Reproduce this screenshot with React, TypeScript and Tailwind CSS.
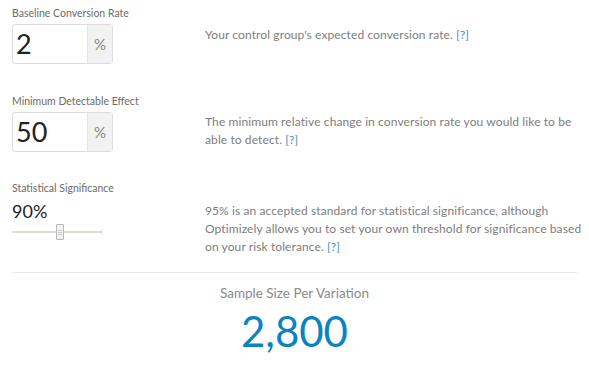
import React, { useState } from "react";

type RowProps = {
  label: string;
  children: React.ReactNode;
  help: React.ReactNode;
  helpClass: string;
};

const Row: React.FC<RowProps> = ({ label, children, help, helpClass }) => (
  <div className="flex">
    <div className="w-[193px] shrink-0">
      <div className="text-[10.5px] leading-[14px] text-[#6b6b6b]">{label}</div>
      {children}
    </div>
    <div
      className={`flex-1 text-[12px] leading-[18px] tracking-[0.1px] text-[#7d7d7d] ${helpClass}`}
    >
      {help}
    </div>
  </div>
);

const Help = () => <span className="text-[#3c8fcb]">[?]</span>;

const PercentInput: React.FC<{ value: string }> = ({ value }) => (
  <div className="mt-[4px] flex h-[40px] w-[101px] rounded-[3px] border border-[#dcdcdc] bg-white">
    <div className="flex flex-1 items-center pl-[3px] text-[27px] text-[#222]">{value}</div>
    <div className="flex w-[25px] items-center justify-center border-l border-[#e3e3e3] bg-[#f2f2f2] text-[15px] text-[#888]">
      %
    </div>
  </div>
);

export default function App() {
  const [sig] = useState(90);

  return (
    <div
      className="h-[365px] w-[589px] overflow-hidden bg-white px-3 pt-[6px]"
      style={{ fontFamily: "Lato, 'Open Sans', sans-serif" }}
    >
      <Row
        label="Baseline Conversion Rate"
        helpClass="pt-[20px]"
        help={
          <>
            Your control group's expected conversion rate. <Help />
          </>
        }
      >
        <PercentInput value="2" />
      </Row>

      <div className="h-[30px]" />

      <Row
        label="Minimum Detectable Effect"
        helpClass="pt-[19px]"
        help={
          <>
            The minimum relative change in conversion rate you would like to be able to detect.{" "}
            <Help />
          </>
        }
      >
        <PercentInput value="50" />
      </Row>

      <div className="h-[29px]" />

      <Row
        label="Statistical Significance"
        helpClass="pt-[21px] -mr-[9px]"
        help={
          <>
            95% is an accepted standard for statistical significance, although Optimizely allows
            you to set your own threshold for significance based on your risk tolerance. <Help />
          </>
        }
      >
        <div className="mt-[5px] text-[18px] leading-[22px] text-[#222]">{sig}%</div>
        <div className="relative mt-[2px] h-[16px] w-[91px]">
          <div className="absolute left-0 right-0 top-[7px] h-[2px] bg-[#e0dcd4]" />
          <div className="absolute left-[44px] top-0 flex h-[16px] w-[8px] flex-col items-center justify-center gap-[1px] rounded-[1px] border border-[#b8b8b8] bg-[#f3f3f3]">
            <div className="h-px w-[4px] bg-[#c8c8c8]" />
            <div className="h-px w-[4px] bg-[#c8c8c8]" />
            <div className="h-px w-[4px] bg-[#c8c8c8]" />
          </div>
        </div>
      </Row>

      <div className="mt-[16px] border-t border-[#e8e8e8]" />

      <div className="flex flex-col items-center pt-[11px]">
        <div className="text-[13.5px] leading-[18px] text-[#8a8a8a]">Sample Size Per Variation</div>
        <div className="mt-[6px] text-[42px] leading-[46px] text-[#0a84c1]">2,800</div>
      </div>
    </div>
  );
}
